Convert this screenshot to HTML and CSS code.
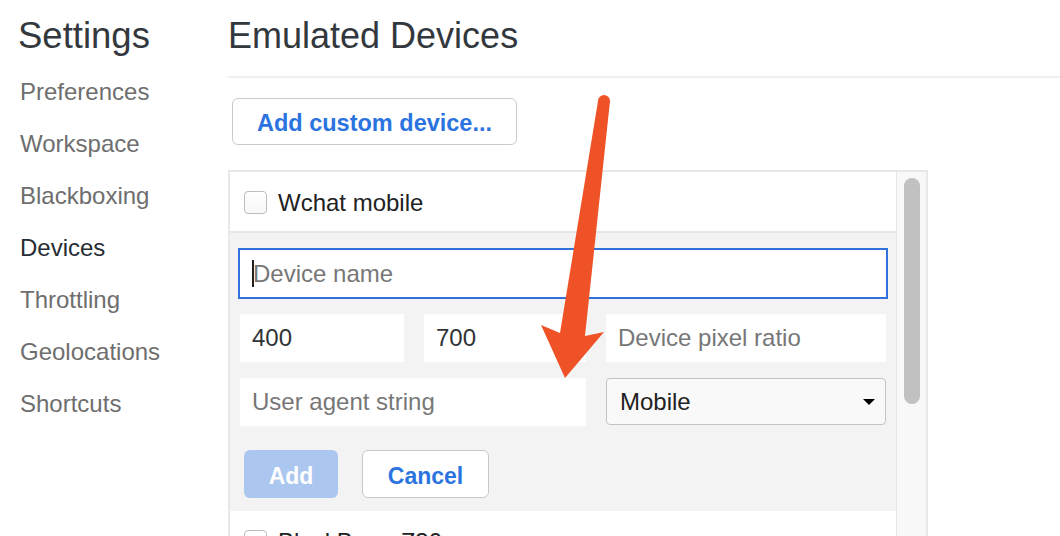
FILE: index.html
```html
<!DOCTYPE html>
<html lang="en">
<head>
<meta charset="utf-8">
<title>Settings - Emulated Devices</title>
<link rel="stylesheet" href="styles.css">
</head>
<body>
<div class="app">
  <aside class="sidebar">
    <div class="sidebar-title">Settings</div>
    <nav class="nav">
      <div class="nav-item">Preferences</div>
      <div class="nav-item">Workspace</div>
      <div class="nav-item">Blackboxing</div>
      <div class="nav-item active">Devices</div>
      <div class="nav-item">Throttling</div>
      <div class="nav-item">Geolocations</div>
      <div class="nav-item">Shortcuts</div>
    </nav>
  </aside>
  <main class="main">
    <h1 class="main-header">Emulated Devices</h1>
    <div class="content">
      <button class="add-btn">Add custom device...</button>
      <div class="list">
        <div class="list-rows">
          <div class="row"><span class="checkbox"></span><span class="row-label">Wchat mobile</span></div>
          <div class="editor">
            <div class="name-wrap">
              <input class="field field-focused" placeholder="Device name">
              <span class="caret"></span>
            </div>
            <div class="grid">
              <input class="field" value="400">
              <input class="field" value="700">
              <input class="field" placeholder="Device pixel ratio">
              <input class="field span2" placeholder="User agent string">
              <div class="select"><span>Mobile</span><span class="tri"></span></div>
            </div>
            <div class="actions">
              <button class="btn-add">Add</button>
              <button class="btn-cancel">Cancel</button>
            </div>
          </div>
          <div class="row"><span class="checkbox"></span><span class="row-label">BlackBerry Z30</span></div>
        </div>
        <div class="scrollbar"><div class="thumb"></div></div>
      </div>
    </div>
  </main>
</div>
<svg class="arrow" width="1060" height="536" viewBox="0 0 1060 536">
  <path d="M598,101 A6,6 0 0 1 610,101 L585,336 L604,332 L565,378 L541,325 L560,333 Z" fill="#f05228"/>
</svg>
</body>
</html>
```

FILE: styles.css
```css
* { box-sizing: border-box; }

html, body {
  margin: 0;
  padding: 0;
  background: #fff;
}

body {
  font-family: "Liberation Sans", Arial, Helvetica, sans-serif;
  width: 1060px;
  height: 536px;
  overflow: hidden;
  position: relative;
}

.app {
  display: flex;
  height: 536px;
  overflow: hidden;
}

.sidebar {
  width: 228px;
  flex: none;
  padding-top: 16px;
}

.sidebar-title {
  font-size: 36.5px;
  line-height: 40px;
  padding-left: 18px;
  color: #32383d;
}

.nav {
  margin-top: 10px;
}

.nav-item {
  font-size: 24px;
  line-height: 52px;
  padding-left: 20px;
  color: #6e6e6e;
}

.nav-item.active {
  color: #262c33;
}

.main {
  flex: 1;
  padding-top: 16px;
  min-width: 0;
}

.main-header {
  margin: 0;
  font-weight: normal;
  font-size: 36px;
  line-height: 40px;
  color: #32383d;
  padding-bottom: 20px;
  border-bottom: 2px solid #efefef;
}

.content {
  display: flex;
  flex-direction: column;
  align-items: flex-start;
}

.add-btn {
  margin: 20px 0 0 4px;
  width: 285px;
  height: 47px;
  border: 1.5px solid #cacaca;
  border-radius: 6px;
  background: #fff;
  color: #2b74e0;
  font-family: "Liberation Sans", Arial, sans-serif;
  font-weight: bold;
  font-size: 23.5px;
  padding: 4px 0 0 0;
}

.list {
  margin-top: 25px;
  width: 700px;
  height: 420px;
  border: 2px solid #e8e8e8;
  display: flex;
}

.list-rows {
  flex: 1;
  min-width: 0;
}

.row {
  height: 61px;
  display: flex;
  align-items: center;
  padding: 2px 0 0 14px;
  border-bottom: 2px solid #e6e6e6;
  background: #fff;
}

.checkbox {
  width: 23px;
  height: 23px;
  border: 1px solid #bdbdbd;
  border-radius: 4px;
  background: linear-gradient(#fff, #f7f7f7);
  flex: none;
}

.row-label {
  margin-left: 11px;
  font-size: 24px;
  color: #222;
}

.editor {
  background: #f3f3f3;
  padding: 15px 10px 13px 10px;
}

.name-wrap {
  position: relative;
  margin: 0 -2px;
}

.field {
  display: block;
  width: 100%;
  height: 48px;
  border: none;
  outline: none;
  background: #fff;
  padding: 0 12px;
  font-family: "Liberation Sans", Arial, sans-serif;
  font-size: 24px;
  color: #303336;
  margin: 0;
}

.field::placeholder {
  color: #777;
}

.field-focused {
  height: 51px;
  border: 2px solid #3071db;
  padding-left: 13px;
}

.caret {
  position: absolute;
  left: 14px;
  top: 12px;
  width: 2px;
  height: 27px;
  background: #222;
}

.grid {
  margin-top: 15px;
  display: grid;
  grid-template-columns: 164px 162px 1fr;
  grid-auto-rows: 48px;
  column-gap: 20px;
  row-gap: 16px;
}

.span2 {
  grid-column: span 2;
}

.select {
  height: 47px;
  border: 1px solid #c3c3c3;
  border-radius: 4px;
  background: #f9f9f9;
  display: flex;
  align-items: center;
  justify-content: space-between;
  padding: 0 10px 0 13px;
  font-size: 24px;
  color: #222;
}

.tri {
  width: 0;
  height: 0;
  border-left: 6px solid transparent;
  border-right: 6px solid transparent;
  border-top: 6px solid #000;
}

.actions {
  margin-top: 24px;
  display: flex;
  gap: 24px;
  padding-left: 4px;
}

.btn-add,
.btn-cancel {
  height: 48px;
  border-radius: 6px;
  font-family: "Liberation Sans", Arial, sans-serif;
  font-weight: bold;
  font-size: 23px;
  padding: 4px 0 0 0;
}

.btn-add {
  width: 94px;
  border: none;
  background: #abc6ef;
  color: #fff;
}

.btn-cancel {
  width: 127px;
  border: 1.5px solid #c8c8c8;
  background: #fff;
  color: #2b74e0;
}

.scrollbar {
  width: 30px;
  flex: none;
  background: #f8f8f8;
  border-left: 1px solid #e6e6e6;
  padding: 6px 0 0 7px;
}

.thumb {
  width: 16px;
  height: 226px;
  border-radius: 8px;
  background: #c1c1c1;
}

.arrow {
  position: absolute;
  left: 0;
  top: 0;
  pointer-events: none;
}
```
